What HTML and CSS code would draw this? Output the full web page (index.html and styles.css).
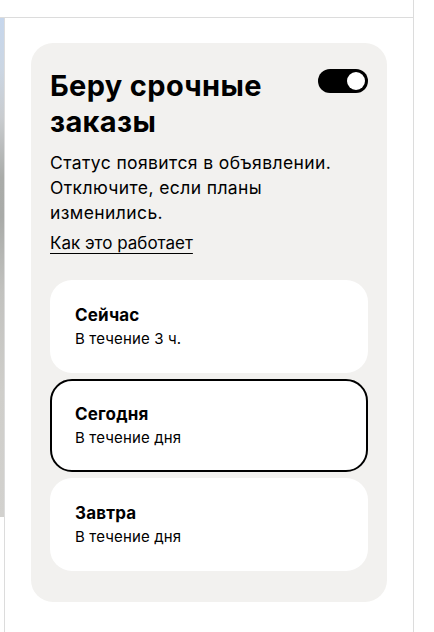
FILE: index.html
```html
<!DOCTYPE html>
<html lang="ru">
<head>
<meta charset="utf-8">
<title>Беру срочные заказы</title>
<link rel="stylesheet" href="styles.css">
</head>
<body>
<div class="page">
  <div class="topbar"></div>
  <div class="row">
    <div class="side"><div class="strip"></div></div>
    <main class="main">
      <section class="card">
        <div class="head">
          <h1 class="title">Беру срочные<br>заказы</h1>
          <span class="toggle" role="switch" aria-checked="true"><span class="knob"></span></span>
        </div>
        <p class="desc">Статус появится в объявлении. Отключите, если планы изменились.</p>
        <a class="link" href="#">Как это работает</a>
        <div class="options">
          <div class="option">
            <div class="opt-title">Сейчас</div>
            <div class="opt-sub">В течение 3 ч.</div>
          </div>
          <div class="option selected">
            <div class="opt-title">Сегодня</div>
            <div class="opt-sub">В течение дня</div>
          </div>
          <div class="option">
            <div class="opt-title">Завтра</div>
            <div class="opt-sub">В течение дня</div>
          </div>
        </div>
      </section>
    </main>
  </div>
</div>
</body>
</html>
```
FILE: styles.css
```css
* { box-sizing: border-box; }
html, body { margin: 0; padding: 0; background: #fff; }
body {
  font-family: Inter, "Noto Sans", "Liberation Sans", sans-serif;
  color: #000;
  height: 632px;
  overflow: hidden;
}
.page {
  width: 414px;
  height: 632px;
  border-right: 1px solid #dcdcdc;
  display: flex;
  flex-direction: column;
}
.topbar {
  height: 18px;
  border-bottom: 1px solid #dcdcdc;
  flex: none;
}
.row {
  flex: 1;
  display: flex;
}
.side {
  width: 5px;
  border-right: 1px solid #dcdcdc;
  flex: none;
}
.strip {
  height: 499px;
  background: linear-gradient(180deg, #c6d6ec 0%, #cbd6e3 10%, #c9cccf 20%, #aaaca9 32%, #a9aba8 40%, #c2c2bf 55%, #cfceca 75%, #d2d1ce 100%);
}
.main {
  flex: 1;
  padding: 25px 0 0 26px;
}
.card {
  width: 356px;
  background: #f2f1ef;
  border-radius: 22px;
  padding: 25px 19px 31px 19px;
}
.head {
  display: flex;
  justify-content: space-between;
  align-items: flex-start;
}
.title {
  margin: 0;
  font-size: 29px;
  line-height: 36px;
  font-weight: 700;
  letter-spacing: 0.35px;
}
.toggle {
  margin-top: 1px;
  width: 50px;
  height: 24px;
  border-radius: 12px;
  background: #000;
  display: flex;
  align-items: center;
  justify-content: flex-end;
  padding-right: 3px;
}
.knob {
  width: 18px;
  height: 18px;
  border-radius: 50%;
  background: #fff;
}
.desc {
  margin: 10px 0 0;
  font-size: 17.5px;
  line-height: 25px;
  letter-spacing: 0.4px;
  width: 310px;
}
.link {
  display: inline-block;
  margin-top: 6px;
  font-size: 17px;
  line-height: 25px;
  color: #000;
  text-decoration: underline;
  text-decoration-thickness: 1px;
  text-underline-offset: 4px;
}
.options {
  margin-top: 24px;
  display: flex;
  flex-direction: column;
  gap: 6px;
}
.option {
  height: 93px;
  background: #fff;
  border: 2px solid transparent;
  border-radius: 22px;
  padding: 22px 22px 0 23px;
}
.option.selected {
  border-color: #000;
}
.opt-title {
  font-size: 17px;
  line-height: 22px;
  font-weight: 700;
  letter-spacing: 0.2px;
}
.opt-sub {
  margin-top: 2px;
  font-size: 15px;
  line-height: 22px;
  letter-spacing: 0.15px;
}
```
